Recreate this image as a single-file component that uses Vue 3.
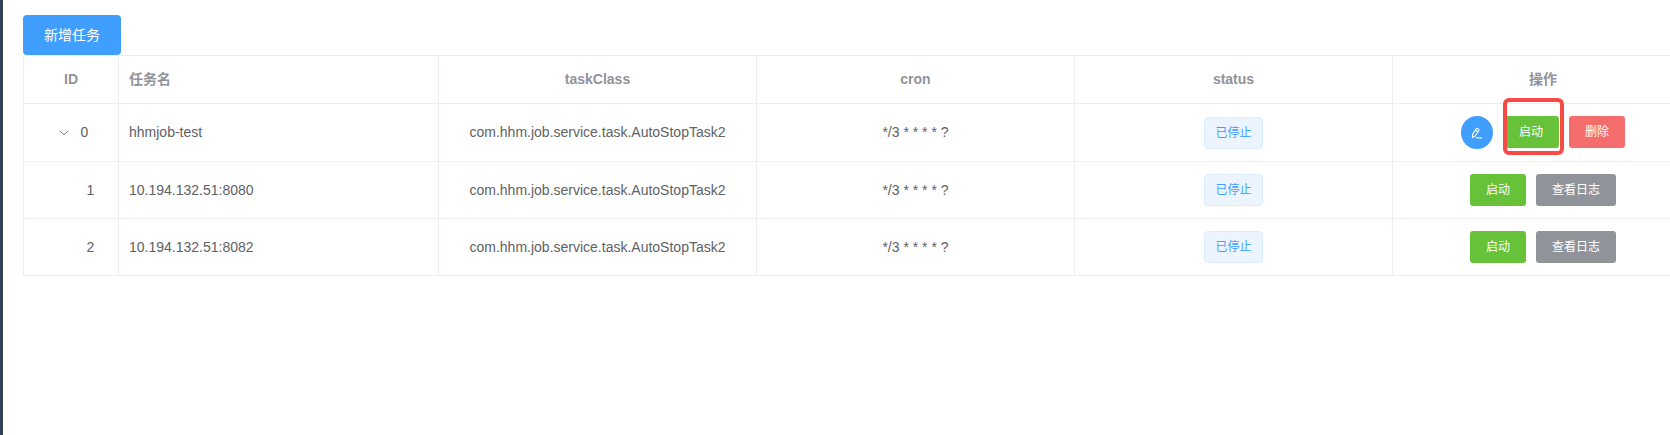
<script setup>
import { ref } from 'vue'

const expanded = ref(true)
const jobs = [
  { id: 0, name: 'hhmjob-test', parent: true, highlight: true },
  { id: 1, name: '10.194.132.51:8080' },
  { id: 2, name: '10.194.132.51:8082' },
].map((job) => ({
  ...job,
  taskClass: 'com.hhm.job.service.task.AutoStopTask2',
  cron: '*/3 * * * * ?',
  status: '已停止',
}))
</script>

<template>
  <div class="page">
    <main class="content">
      <button type="button" class="btn btn-primary">新增任务</button>
      <table class="table">
        <colgroup>
          <col class="col-id" />
          <col class="col-name" />
          <col />
          <col />
          <col />
          <col class="col-actions" />
        </colgroup>
        <thead>
          <tr>
            <th scope="col">ID</th>
            <th scope="col" class="left">任务名</th>
            <th scope="col">taskClass</th>
            <th scope="col">cron</th>
            <th scope="col">status</th>
            <th scope="col">操作</th>
          </tr>
        </thead>
        <tbody>
          <tr v-for="job in jobs" v-show="job.parent || expanded" :key="job.id">
            <td>
              <div class="tree-cell">
                <button
                  v-if="job.parent"
                  type="button"
                  class="toggle"
                  aria-label="展开"
                  :aria-expanded="expanded"
                  @click="expanded = !expanded"
                >
                  <svg width="10" height="6" viewBox="0 0 10 6" fill="none" stroke="currentColor">
                    <path d="M.8 1 L5 4.8 L9.2 1" />
                  </svg>
                </button>
                <span v-else class="indent"></span>
                <span>{{ job.id }}</span>
              </div>
            </td>
            <td class="left">{{ job.name }}</td>
            <td>{{ job.taskClass }}</td>
            <td>{{ job.cron }}</td>
            <td><span class="tag">{{ job.status }}</span></td>
            <td>
              <div class="actions">
                <button v-if="job.parent" type="button" class="btn-circle" aria-label="编辑">
                  <svg width="12" height="12" viewBox="0 0 12 12" fill="none" stroke="currentColor" stroke-width="1.1" stroke-linejoin="round">
                    <path d="M1.6 7.4 L5.2 1.7 Q5.7 1 6.4 1.4 L7.5 2.1 Q8.2 2.6 7.8 3.3 L4.2 9 L1.5 10.6 Z M4.3 3.1 L6.9 4.7" />
                    <path d="M5 10.9 H11" />
                  </svg>
                </button>
                <span class="start">
                  <button type="button" class="btn btn-small btn-success">启动</button>
                  <span v-if="job.highlight" class="marker"></span>
                </span>
                <button v-if="job.parent" type="button" class="btn btn-small btn-danger">删除</button>
                <button v-else type="button" class="btn btn-small btn-info">查看日志</button>
              </div>
            </td>
          </tr>
        </tbody>
      </table>
    </main>
  </div>
</template>

<style>
body {
  margin: 0;
  background: #fff;
}
</style>

<style scoped>
.page {
  box-sizing: border-box;
  min-height: 100vh;
  border-left: 3px solid #304156;
  overflow: hidden;
  font-family: "Liberation Sans", "Noto Sans CJK SC", sans-serif;
  font-size: 14px;
  color: #606266;
}

.content {
  padding: 15px 0 0 20px;
}

button {
  font-family: inherit;
  cursor: pointer;
}

.btn {
  display: block;
  box-sizing: border-box;
  height: 40px;
  padding: 0 20px;
  border: 1px solid transparent;
  border-radius: 4px;
  font-size: 14px;
  line-height: 14px;
  font-weight: 400;
  color: #fff;
}

.btn-small {
  height: 32px;
  padding: 0 15px;
  border-radius: 3px;
  font-size: 12px;
  line-height: 12px;
}

.btn-primary {
  background: #409eff;
}

.btn-success {
  background: #67c23a;
}

.btn-danger {
  background: #f56c6c;
}

.btn-info {
  background: #909399;
}

.btn-circle {
  display: flex;
  align-items: center;
  justify-content: center;
  width: 32px;
  height: 33px;
  padding: 0;
  border: 0;
  border-radius: 50%;
  background: #409eff;
  color: #fff;
}

/* The last column runs past the right edge of the viewport. */
.table {
  width: calc(100% + 24px);
  table-layout: fixed;
  border-collapse: separate;
  border-spacing: 0;
  border-top: 1px solid #ebeef5;
  border-left: 1px solid #ebeef5;
}

.col-id {
  width: 95px;
}

.col-name {
  width: 320px;
}

.col-actions {
  width: 301px;
}

th,
td {
  box-sizing: border-box;
  padding: 12px 0;
  border-right: 1px solid #ebeef5;
  border-bottom: 1px solid #ebeef5;
  line-height: 23px;
  text-align: center;
  vertical-align: middle;
}

th {
  font-weight: 700;
  color: #909399;
}

.left {
  padding-left: 10px;
  text-align: left;
}

.tree-cell,
.actions {
  display: flex;
  justify-content: center;
}

.toggle {
  display: flex;
  align-items: center;
  justify-content: center;
  width: 20px;
  height: 23px;
  margin-right: 7px;
  padding: 0;
  border: 0;
  background: none;
  color: #777a80;
}

.indent {
  width: 39px;
}

.tag {
  display: block;
  box-sizing: border-box;
  width: fit-content;
  height: 32px;
  margin: 0 auto;
  padding: 0 10px;
  border: 1px solid #d9ecff;
  border-radius: 4px;
  background: #ecf5ff;
  font-size: 12px;
  line-height: 30px;
  color: #409eff;
}

.actions {
  gap: 10px;
}

.start {
  position: relative;
}

.marker {
  position: absolute;
  inset: -18px -5px -6px 0;
  border: 4px solid #f74a46;
  border-radius: 6px;
  pointer-events: none;
}
</style>
